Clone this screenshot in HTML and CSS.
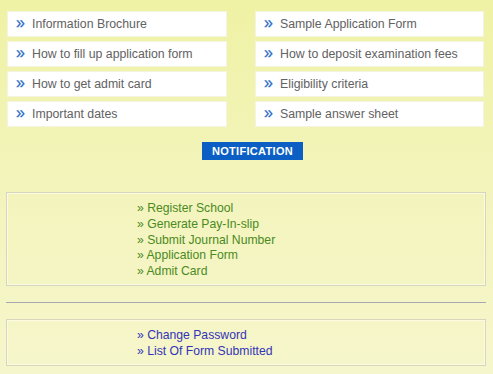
FILE: index.html
```html
<!DOCTYPE html>
<html lang="en">
<head>
    <meta charset="UTF-8">
    <meta name="viewport" content="width=device-width, initial-scale=1.0">
    <title>Examination Portal</title>
    <link rel="stylesheet" href="styles.css">
</head>
<body>

    <!-- Info links -->
    <div class="info-grid">
        <a class="info-box" href="#"><span class="arrow">&raquo;</span>Information Brochure</a>
        <a class="info-box" href="#"><span class="arrow">&raquo;</span>Sample Application Form</a>
        <a class="info-box" href="#"><span class="arrow">&raquo;</span>How to fill up application form</a>
        <a class="info-box" href="#"><span class="arrow">&raquo;</span>How to deposit examination fees</a>
        <a class="info-box" href="#"><span class="arrow">&raquo;</span>How to get admit card</a>
        <a class="info-box" href="#"><span class="arrow">&raquo;</span>Eligibility criteria</a>
        <a class="info-box" href="#"><span class="arrow">&raquo;</span>Important dates</a>
        <a class="info-box" href="#"><span class="arrow">&raquo;</span>Sample answer sheet</a>
    </div>

    <div class="notify-row">
        <a class="notify-btn" href="#">NOTIFICATION</a>
    </div>

    <!-- School menu -->
    <div class="menu-box">
        <ul class="menu-list green">
            <li><a href="#">&raquo; Register School</a></li>
            <li><a href="#">&raquo; Generate Pay-In-slip</a></li>
            <li><a href="#">&raquo; Submit Journal Number</a></li>
            <li><a href="#">&raquo; Application Form</a></li>
            <li><a href="#">&raquo; Admit Card</a></li>
        </ul>
    </div>

    <hr class="divider">

    <!-- Account menu -->
    <div class="menu-box small">
        <ul class="menu-list blue">
            <li><a href="#">&raquo; Change Password</a></li>
            <li><a href="#">&raquo; List Of Form Submitted</a></li>
        </ul>
    </div>

</body>
</html>
```

FILE: styles.css
```css
html, body {
    margin: 0;
    height: 100%;
}

body {
    font-family: "Liberation Sans", Arial, sans-serif;
    background: linear-gradient(to bottom, #eff2a4 0%, #f3f4bc 50%, #f6f6cc 100%);
    overflow: hidden;
}

a {
    text-decoration: none;
}

.info-grid {
    display: grid;
    grid-template-columns: 218px 227px;
    column-gap: 30px;
    row-gap: 6px;
    padding: 12px 0 0 8px;
}

.info-box {
    display: flex;
    align-items: center;
    height: 24px;
    background-color: #ffffff;
    box-shadow: 0 0 0 1px #f4f5e0;
    color: #626262;
    font-size: 12.3px;
}

.info-box .arrow {
    color: #2a6cc4;
    font-size: 16px;
    width: 24px;
    padding-left: 8px;
    box-sizing: border-box;
    margin-top: -2px;
    -webkit-text-stroke: 0.3px #2a6cc4;
}

.notify-row {
    display: flex;
    justify-content: center;
    padding: 16px 0 0 12px;
}

.notify-btn {
    display: block;
    width: 101px;
    height: 18px;
    line-height: 18px;
    text-align: center;
    background-color: #0b5fc4;
    color: #ffffff;
    font-size: 11px;
    font-weight: bold;
    letter-spacing: 0.3px;
}

.menu-box {
    margin: 32px 7px 0 6px;
    height: 94px;
    box-sizing: border-box;
    border: 1px solid #d6d6bc;
    box-shadow: inset 0 0 0 1px #fbfbe4;
    padding: 8px 0 0 130px;
}

.menu-box.small {
    margin-top: 16px;
    height: 47px;
}

.menu-list {
    list-style: none;
    margin: 0;
    padding: 0;
    font-size: 12.2px;
    line-height: 15.75px;
}

.menu-list.green a {
    color: #4b8a1e;
}

.menu-list.blue a {
    color: #3434b8;
}

.divider {
    margin: 16px 7px 0 6px;
    border: 0;
    height: 1px;
    background-color: #a8a8b4;
}
```
